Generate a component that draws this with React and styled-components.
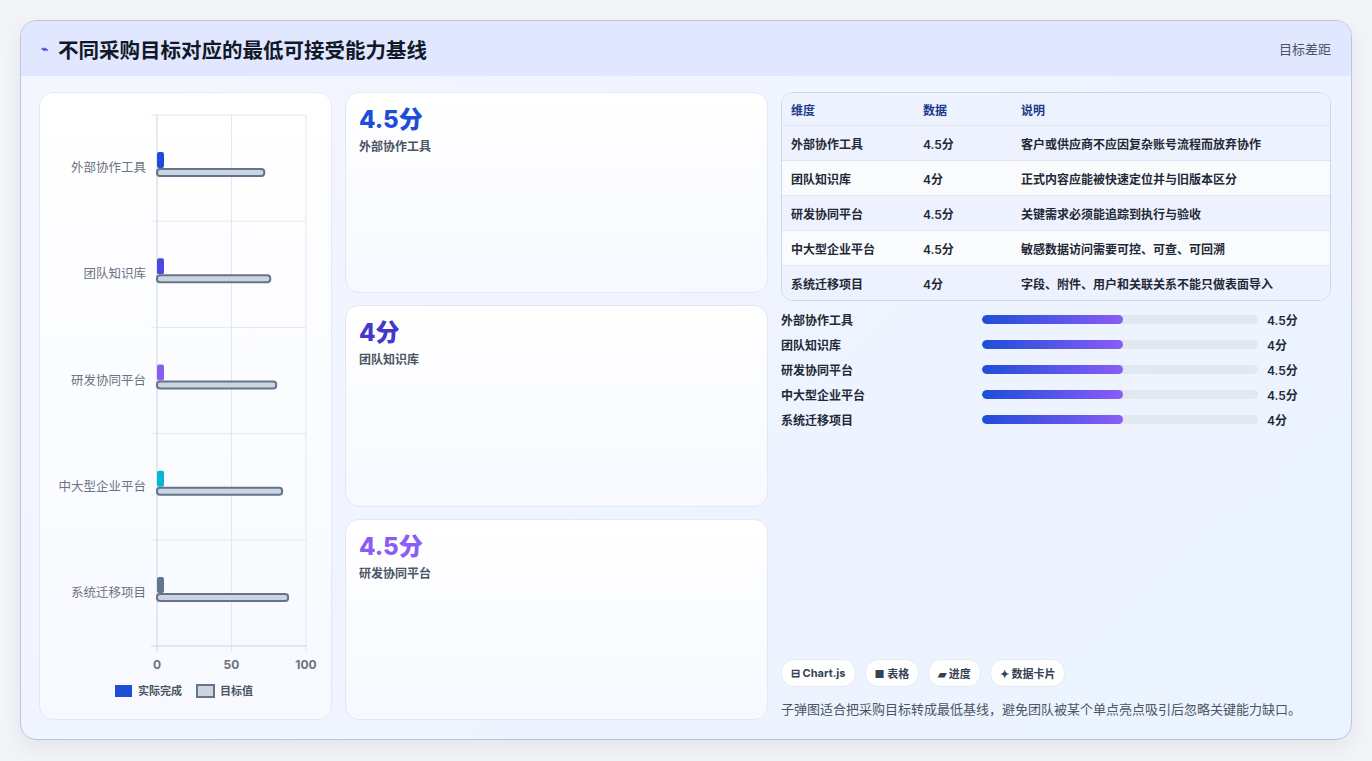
import React from "react";
import styled, { createGlobalStyle } from "styled-components";

const Global = createGlobalStyle`
  html, body { margin: 0; padding: 0; background: #f3f4f6; }
  body { font-family: Inter, "Noto Sans CJK SC", sans-serif; }
`;

const Page = styled.div`
  padding: 20px;
  width: 1372px;
  height: 761px;
  box-sizing: border-box;
`;

const Card = styled.div`
  height: 720px;
  box-sizing: border-box;
  border: 1px solid #b9c6ea;
  border-radius: 16px;
  background: linear-gradient(135deg, #f4f6ff 0%, #eef4ff 60%, #eaf3ff 100%);
  overflow: hidden;
  display: flex;
  flex-direction: column;
  box-shadow: 0 8px 20px rgba(30, 50, 120, 0.08);
`;

const Header = styled.div`
  height: 55px;
  flex: none;
  background: #e0e7ff;
  display: flex;
  align-items: center;
  justify-content: space-between;
  padding: 0 20px;
`;

const Title = styled.h1`
  margin: 0;
  font-size: 20.5px;
  font-weight: 700;
  color: #111827;
  display: flex;
  align-items: center;
  gap: 10px;
`;

const HeaderRight = styled.span`
  font-size: 13px;
  color: #4b5563;
`;

const Body = styled.div`
  flex: 1;
  display: grid;
  grid-template-columns: 293px 423px 550px;
  gap: 13px;
  padding: 16px 18px 18px 18px;
  min-height: 0;
`;

const Panel = styled.div`
  background: linear-gradient(180deg, #ffffff 0%, #f7f9ff 100%);
  border: 1px solid #e2e8f5;
  border-radius: 14px;
  box-sizing: border-box;
`;

const ChartPanel = styled(Panel)`
  height: 628px;
`;

const Mid = styled.div`
  display: grid;
  grid-template-rows: repeat(3, 1fr);
  gap: 12px;
  height: 628px;
`;

const Stat = styled(Panel)`
  padding: 12px 13px;
`;

const StatValue = styled.div`
  font-size: 24px;
  font-weight: 800;
  color: ${(p) => p.c};
  line-height: 30px;
`;

const StatLabel = styled.div`
  font-size: 12px;
  font-weight: 600;
  color: #4b5563;
  margin-top: 2px;
`;

const Right = styled.div`
  display: flex;
  flex-direction: column;
  height: 628px;
`;

const Table = styled.div`
  border: 1px solid #cfd8ea;
  border-radius: 12px;
  overflow: hidden;
  background: #f8faff;
`;

const Row = styled.div`
  display: grid;
  grid-template-columns: 132px 98px 1fr;
  height: ${(p) => (p.head ? 32 : 34)}px;
  align-items: center;
  padding: 0 9px;
  font-size: 12px;
  font-weight: ${(p) => (p.head ? 700 : 600)};
  color: ${(p) => (p.head ? "#1e3a8a" : "#1f2937")};
  background: ${(p) => (p.head ? "#edf2ff" : p.alt ? "#f9fbfd" : "#eef2fe")};
  border-top: ${(p) => (p.head ? "none" : "1px solid #dfe5f1")};
`;

const Bars = styled.div`
  display: flex;
  flex-direction: column;
  gap: 8px;
  margin-top: 10px;
`;

const BarRow = styled.div`
  display: grid;
  grid-template-columns: 201px 285px 1fr;
  align-items: center;
  font-size: 12px;
  font-weight: 600;
  color: #1f2937;
  height: 17px;
`;

const Track = styled.div`
  height: 9px;
  border-radius: 5px;
  background: #e2e8f0;
  margin-right: 9px;
  overflow: hidden;
`;

const Fill = styled.div`
  height: 100%;
  border-radius: 5px;
  background: linear-gradient(90deg, #1d4ed8, #8b5cf6);
`;

const Spacer = styled.div`
  flex: 1;
`;

const Chips = styled.div`
  display: flex;
  gap: 9px;
`;

const Chip = styled.div`
  height: 26px;
  padding: 0 9px;
  border-radius: 13px;
  background: #fff;
  border: 1px solid #e5eaf3;
  font-size: 11px;
  font-weight: 700;
  color: #374151;
  display: flex;
  align-items: center;
  gap: 3px;
`;

const Note = styled.p`
  margin: 12px 0 2px;
  font-size: 13px;
  color: #4b5563;
`;

const cats = ["外部协作工具", "团队知识库", "研发协同平台", "中大型企业平台", "系统迁移项目"];
const vals = ["4.5分", "4分", "4.5分", "4.5分", "4分"];
const notes = [
  "客户或供应商不应因复杂账号流程而放弃协作",
  "正式内容应能被快速定位并与旧版本区分",
  "关键需求必须能追踪到执行与验收",
  "敏感数据访问需要可控、可查、可回溯",
  "字段、附件、用户和关联关系不能只做表面导入",
];
const colors = ["#1d4ed8", "#4f46e5", "#8b5cf6", "#06b6d4", "#64748b"];
const targets = [72, 76, 80, 84, 88];

function Chart() {
  const x0 = 117, x1 = 266, top = 22, bottom = 553;
  const step = (bottom - top) / 5;
  const sx = (v) => x0 + ((x1 - x0) * v) / 100;
  return (
    <svg width="292" height="626" style={{ display: "block" }}>
      {[0, 50, 100].map((v) => (
        <line key={v} x1={sx(v)} x2={sx(v)} y1={top} y2={bottom + 6} stroke={v === 0 ? "#cbd5e1" : "#e5e7eb"} />
      ))}
      {[0, 1, 2, 3, 4, 5].map((i) => (
        <line key={i} x1={x0 - 6} x2={x1} y1={top + step * i} y2={top + step * i} stroke={i === 5 ? "#cbd5e1" : "#e5e7eb"} />
      ))}
      {cats.map((c, i) => {
        const cy = top + step * i + step / 2;
        return (
          <g key={c}>
            <text x={x0 - 11} y={cy + 4} textAnchor="end" fontSize="12.5" fill="#6b7280" fontFamily="Noto Sans CJK SC, sans-serif">{c}</text>
            <rect x={x0} y={cy - 16} width={7} height={16} rx={2} fill={colors[i]} />
            <rect x={x0} y={cy + 1} width={sx(targets[i]) - x0} height={7} rx={3} fill="#cbd5e1" stroke="#64748b" strokeWidth="2" />
          </g>
        );
      })}
      {[0, 50, 100].map((v) => (
        <text key={v} x={sx(v)} y={576} textAnchor="middle" fontSize="12" fontWeight="700" fill="#6b7280" fontFamily="Inter, sans-serif">{v}</text>
      ))}
      <rect x={75} y={592} width={17} height={12} fill="#1d4ed8" />
      <text x={98} y={602} fontSize="11" fontWeight="600" fill="#4b5563" fontFamily="Noto Sans CJK SC, sans-serif">实际完成</text>
      <rect x={157} y={592} width={17} height={12} fill="#cbd5e1" stroke="#64748b" strokeWidth="2" />
      <text x={180} y={602} fontSize="11" fontWeight="600" fill="#4b5563" fontFamily="Noto Sans CJK SC, sans-serif">目标值</text>
    </svg>
  );
}

export default function App() {
  return (
    <Page>
      <Global />
      <Card>
        <Header>
          <Title>
            <span style={{ color: "#4f46e5", fontSize: 12 }}>⌁</span>
            不同采购目标对应的最低可接受能力基线
          </Title>
          <HeaderRight>目标差距</HeaderRight>
        </Header>
        <Body>
          <ChartPanel>
            <Chart />
          </ChartPanel>
          <Mid>
            <Stat>
              <StatValue c="#1d4ed8">4.5分</StatValue>
              <StatLabel>外部协作工具</StatLabel>
            </Stat>
            <Stat>
              <StatValue c="#4338ca">4分</StatValue>
              <StatLabel>团队知识库</StatLabel>
            </Stat>
            <Stat>
              <StatValue c="#8b5cf6">4.5分</StatValue>
              <StatLabel>研发协同平台</StatLabel>
            </Stat>
          </Mid>
          <Right>
            <Table>
              <Row head>
                <span>维度</span>
                <span>数据</span>
                <span>说明</span>
              </Row>
              {cats.map((c, i) => (
                <Row key={c} alt={i % 2 === 1}>
                  <span>{c}</span>
                  <span>{vals[i]}</span>
                  <span>{notes[i]}</span>
                </Row>
              ))}
            </Table>
            <Bars>
              {cats.map((c, i) => (
                <BarRow key={c}>
                  <span>{c}</span>
                  <Track>
                    <Fill style={{ width: "51%" }} />
                  </Track>
                  <span>{vals[i]}</span>
                </BarRow>
              ))}
            </Bars>
            <Spacer />
            <Chips>
              <Chip>⊟ Chart.js</Chip>
              <Chip>■ 表格</Chip>
              <Chip>▰ 进度</Chip>
              <Chip>✦ 数据卡片</Chip>
            </Chips>
            <Note>子弹图适合把采购目标转成最低基线，避免团队被某个单点亮点吸引后忽略关键能力缺口。</Note>
          </Right>
        </Body>
      </Card>
    </Page>
  );
}
